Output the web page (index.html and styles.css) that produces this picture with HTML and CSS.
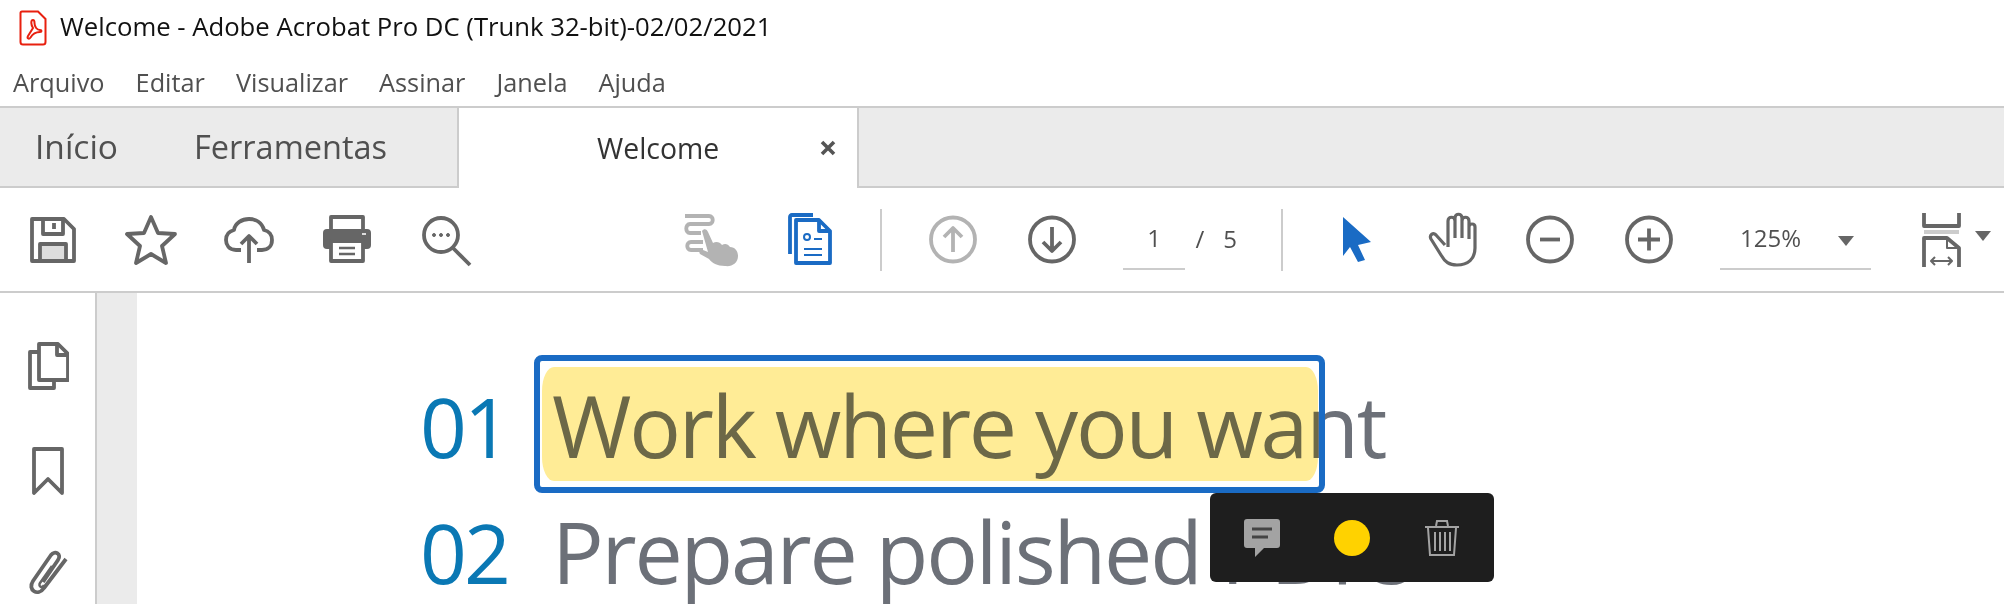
FILE: index.html
```html
<!DOCTYPE html>
<html>
<head>
    <title>Welcome - Adobe Acrobat Pro DC</title>
    <link rel="stylesheet" href="styles.css">
</head>
<body>
    <div class="title-bar">
        <svg class="app-icon" width="28" height="36" viewBox="0 0 28 36">
            <path d="M3 1.500H19L26.500 9V32Q26.500 34.500 24 34.500H4Q1.500 34.500 1.500 32V3Q1.500 1.500 3 1.500Z" fill="#fff" stroke="#e8200f" stroke-width="2"/>
            <path d="M14 10C11.500 10 12 15 14 18L9 26C7.500 28.500 10 29.500 11.500 27.500C13.500 24 17 22 21 22C23 22 23 20 21 20C18 20 15.500 17 15.500 13C15.500 11 15 10 14 10Z" fill="none" stroke="#e8200f" stroke-width="2"/>
        </svg>
        <span class="app-title">Welcome - Adobe Acrobat Pro DC (Trunk 32-bit)-02/02/2021</span>
    </div>
    <div class="menu-bar">
        <span class="menu-item">Arquivo</span>
        <span class="menu-item">Editar</span>
        <span class="menu-item">Visualizar</span>
        <span class="menu-item">Assinar</span>
        <span class="menu-item">Janela</span>
        <span class="menu-item">Ajuda</span>
    </div>
    <div class="tab-bar">
        <span class="tab tab-home">Início</span>
        <span class="tab tab-tools">Ferramentas</span>
        <div class="tab-doc">
            <span class="tab-doc-name">Welcome</span>
            <svg class="tab-close" width="16" height="16" viewBox="0 0 16 16"><path d="M2 2L14 14M14 2L2 14"/></svg>
        </div>
    </div>
    <div class="toolbar">
        <div class="tool-group">
            <svg class="tool" viewBox="0 0 50 54"><path d="M4 6H36L46 16V48H4Z"/><path d="M15 6V21H35V6"/><path d="M26 10V16"/><rect x="12" y="31" width="26" height="17" fill="#ddd"/></svg>
            <svg class="tool" viewBox="0 0 50 54"><polygon points="25,4 32,20 49,21 36,33 40,50 25,41 10,50 14,33 1,21 18,20"/></svg>
            <svg class="tool" viewBox="0 0 50 54"><path d="M17 37H12C5 37 2 32 2 27C2 21 6 18 10 17C11 10 18 6 25 6C32 6 38 10 40 17C45 18 48 22 48 27C48 33 44 37 38 37H33"/><path d="M25 50V24M17 31L25 23L33 31"/></svg>
            <svg class="tool" viewBox="0 0 50 54"><rect x="9" y="4" width="32" height="14"/><rect x="1" y="16" width="48" height="20" rx="4" fill="#666" stroke="none"/><rect x="9" y="28" width="32" height="20" fill="#fff"/><path d="M17 35H33M17 41H33" stroke-width="2.500"/><path d="M40 21H44" stroke="#ddd" stroke-width="2"/></svg>
            <svg class="tool" viewBox="0 0 50 54"><circle cx="21" cy="22" r="17"/><path d="M33 35L50 52"/><circle cx="14" cy="22" r="1.500" fill="#666" stroke-width="1"/><circle cx="21" cy="22" r="1.500" fill="#666" stroke-width="1"/><circle cx="28" cy="22" r="1.500" fill="#666" stroke-width="1"/></svg>
        </div>
        <svg class="tool tool-gesture" viewBox="0 0 50 54"><path class="soft" d="M0 3H24C29 3 29 11 24 11H5C0 11 0 20 5 20H16M18 29H6C1 29 1 37 6 37H18"/><path d="M17 18C19 15 22 16 23 19L28 30C31 28 35 29 37 32C40 30 43 31 45 34C50 34 53 38 53 43C53 50 47 54 40 53C32 53 27 50 24 46L15 41C13 38 16 36 18 37L23 39Z" fill="#b3b3b3" stroke="none"/></svg>
        <svg class="tool tool-pages" viewBox="0 0 50 54"><g class="blue"><path d="M5 41V4Q5 2 7 2H28"/><path d="M11 7H34L45 18V50H11Z"/><path d="M34 7V18H45"/><circle cx="22" cy="24" r="3" stroke-width="2"/><path d="M29 26H37M19 36H37M19 42H37" stroke-width="2.200"/></g></svg>
        <div class="tool-sep sep-first"></div>
        <svg class="tool tool-up" viewBox="0 0 50 54"><g class="soft"><circle cx="25" cy="26.500" r="22"/><path d="M25 39V15M16 24L25 15L34 24"/></g></svg>
        <svg class="tool tool-down" viewBox="0 0 50 54"><circle cx="25" cy="26.500" r="22"/><path d="M25 14V38M16 29L25 38L34 29"/></svg>
        <div class="page-field">1</div>
        <span class="page-text">/</span>
        <span class="page-text">5</span>
        <div class="tool-sep sep-second"></div>
        <svg class="tool tool-cursor" viewBox="0 0 30 54"><polygon class="cursor-shape" points="1,4 29,29 16,32 23,47 16,49 8,34 1,43"/></svg>
        <svg class="tool tool-hand" viewBox="0 0 50 54"><path d="M17 32L8 22C5 19 1 22 3 26L13 42C17 49 21 52 29 52C40 52 47 46 47 35V14C47 10 41 10 41 14V26M41 26V8C41 3 34 3 34 8V25M34 25V5C34 0 27 0 27 5V25M27 25V8C27 3 20 3 20 8V34" stroke-width="3.200"/></svg>
        <svg class="tool tool-minus" viewBox="0 0 50 54"><circle cx="25" cy="26.500" r="22"/><path d="M15 26.500H35"/></svg>
        <svg class="tool tool-plus" viewBox="0 0 50 54"><circle cx="25" cy="26.500" r="22"/><path d="M14 26.500H36M25 15.500V37.500"/></svg>
        <div class="zoom-field">
            <span class="zoom-value">125%</span>
            <span class="caret"></span>
        </div>
        <svg class="tool tool-fit" viewBox="0 0 37 54"><path d="M1 0V13H36V0"/><path d="M1 19H36" stroke="#ccc"/><path d="M1 54V25H24L36 35V54"/><path d="M24 25V35H36" stroke-width="2"/><path d="M8 48H29M12 44L8 48L12 52M25 44L29 48L25 52" stroke-width="2"/></svg>
        <span class="caret caret-fit"></span>
    </div>
    <div class="workspace">
        <div class="side-panel">
            <svg class="side-icon" width="42" height="48" viewBox="0 0 42 48"><path d="M12 10H3V46H27V38"/><path d="M12 2H31L41 12V38H12Z"/><path d="M30 2V13H41"/></svg>
            <svg class="side-icon" width="32" height="48" viewBox="0 0 32 48"><path d="M2 2H30V46L16 32L2 46Z"/></svg>
            <svg class="side-icon side-clip" width="42" height="46" viewBox="0 0 42 46"><path d="M16 33L31 11C35 5 28 1 24 6L6 32C0 41 11 48 17 39L39 10"/><path d="M25 17L13 34C11 37 15 40 17 36" stroke-width="2.500"/></svg>
        </div>
        <div class="gutter"></div>
        <div class="document">
            <div class="doc-line"><span class="doc-num">01</span><span class="doc-text">Work where you want</span></div>
            <div class="doc-line"><span class="doc-num">02</span><span class="doc-text">Prepare polished PDFs</span></div>
            <div class="highlight-box"><div class="highlight-fill"></div></div>
            <div class="note-popup">
                <svg width="36" height="38" viewBox="0 0 36 38"><path d="M3 0H33Q36 0 36 3V26Q36 29 33 29H20L11 38V29H3Q0 29 0 26V3Q0 0 3 0Z" fill="#a3a3a3"/><path d="M8 10H28M8 18H24" stroke="#444" stroke-width="3"/></svg>
                <span class="note-color"></span>
                <svg width="36" height="38" viewBox="0 0 36 38" fill="none" stroke="#a3a3a3" stroke-width="2"><path d="M1 8H35M12 7L13 2H23L24 7"/><path d="M4 9L6 36H30L32 9"/><path d="M11 13V32M16 13V32M21 13V32M26 13V32"/></svg>
            </div>
        </div>
    </div>
</body>
</html>
```

FILE: styles.css
```css
html, body {
    margin: 0;
    height: 604px;
    overflow: hidden;
}
body {
    font-family: 'Open Sans', sans-serif;
    background-color: #fff;
    color: #505050;
}
.title-bar {
    display: flex;
    align-items: center;
    height: 56px;
    padding-left: 19px;
}
.app-title {
    margin-left: 13px;
    margin-bottom: 4px;
    font-size: 25.7px;
    color: #111;
}
.menu-bar {
    display: flex;
    gap: 31px;
    height: 50px;
    padding-left: 13px;
    font-size: 25.300px;
    line-height: 53px;
}
.tab-bar {
    display: flex;
    height: 78px;
    border-top: 2px solid #ccc;
    border-bottom: 2px solid #ccc;
    background-color: #ebebeb;
}
.tab {
    flex: none;
    font-size: 32.500px;
    line-height: 77px;
}
.tab-home {
    width: 159px;
    margin-left: 35px;
    font-size: 33.500px;
}
.tab-tools {
    width: 263px;
}
.tab-doc {
    display: flex;
    align-items: center;
    box-sizing: border-box;
    width: 402px;
    height: 80px;
    border-left: 2px solid #ccc;
    border-right: 2px solid #ccc;
    background-color: #fff;
    color: #333;
    font-size: 28.400px;
    line-height: 80px;
}
.tab-doc-name {
    width: 122px;
    margin-left: 138px;
}
.tab-close {
    margin-left: 101px;
    fill: none;
    stroke: #555;
    stroke-width: 3.600;
}
.toolbar {
    display: flex;
    align-items: center;
    height: 103px;
    padding-left: 28px;
    border-bottom: 2px solid #ccc;
}
.tool-group {
    display: flex;
    gap: 48px;
}
.tool {
    flex: none;
    width: 50px;
    height: 54px;
    overflow: visible;
    fill: none;
    stroke: #666;
    stroke-width: 3.800;
    stroke-linejoin: round;
}
.tool .soft {
    stroke: #b3b3b3;
}
.tool .blue {
    stroke: #1a6bc4;
    stroke-width: 3.800;
}
.tool-gesture {
    margin-left: 215px;
}
.tool-pages {
    margin-left: 50px;
}
.tool-sep {
    flex: none;
    width: 2px;
    height: 62px;
    background-color: #ccc;
}
.sep-first {
    margin-left: 45px;
}
.tool-up {
    margin-left: 46px;
}
.tool-down {
    margin-left: 49px;
}
.page-field {
    flex: none;
    box-sizing: border-box;
    width: 62px;
    height: 60px;
    margin-left: 46px;
    border-bottom: 2px solid #ccc;
    text-align: center;
    font-size: 24px;
    line-height: 56px;
}
.page-text {
    flex: none;
    width: 30px;
    margin-bottom: 3px;
    text-align: center;
    font-size: 24px;
}
.sep-second {
    margin-left: 36px;
}
.tool-cursor {
    width: 30px;
    margin-left: 59px;
}
.cursor-shape {
    fill: #1a6bc4;
    stroke: none;
}
.tool-hand {
    margin-left: 56px;
}
.tool-minus {
    margin-left: 47px;
}
.tool-plus {
    margin-left: 49px;
}
.zoom-field {
    display: flex;
    flex: none;
    box-sizing: border-box;
    width: 151px;
    height: 60px;
    margin-left: 46px;
    padding-left: 20px;
    border-bottom: 2px solid #ccc;
    font-size: 24px;
    line-height: 56px;
}
.zoom-value {
    flex: none;
    width: 98px;
}
.caret {
    flex: none;
    width: 0;
    height: 0;
    margin-top: 26px;
    border-left: 8px solid transparent;
    border-right: 8px solid transparent;
    border-top: 10px solid #666;
}
.tool-fit {
    width: 37px;
    margin-left: 52px;
}
.caret-fit {
    margin-top: -8px;
    margin-left: 15px;
}
.workspace {
    display: flex;
    height: 311px;
}
.side-panel {
    display: flex;
    flex-direction: column;
    align-items: center;
    flex: none;
    gap: 57px;
    box-sizing: border-box;
    width: 97px;
    padding-top: 49px;
    border-right: 2px solid #ccc;
}
.side-icon {
    flex: none;
    fill: none;
    stroke: #666;
    stroke-width: 3.800;
    stroke-linejoin: round;
}
.side-clip {
    margin-top: -3px;
}
.gutter {
    flex: none;
    width: 40px;
    background-color: #ebebeb;
}
.document {
    position: relative;
    display: flex;
    flex-direction: column;
    flex: 1;
    gap: 25px;
    padding-top: 82px;
    padding-left: 285px;
    overflow: hidden;
    font-size: 86px;
    line-height: 100px;
    letter-spacing: -2.200px;
    color: #6c7078;
}
.doc-line {
    display: flex;
    align-items: baseline;
    white-space: nowrap;
}
.doc-num {
    flex: none;
    width: 130px;
    font-size: 82px;
    letter-spacing: -3px;
    color: #0a78b4;
}
.doc-line .doc-num {
    margin-left: -2px;
    margin-right: 2px;
}
.highlight-box {
    position: absolute;
    left: 397px;
    top: 62px;
    box-sizing: border-box;
    width: 791px;
    height: 138px;
    padding: 6px 1px 6px 2px;
    border: 6px solid #1a6bc4;
    border-radius: 8px;
}
.highlight-fill {
    height: 100%;
    border-radius: 12px / 24px;
    background-color: #ffec96;
    mix-blend-mode: multiply;
}
.note-popup {
    position: absolute;
    left: 1073px;
    top: 200px;
    display: flex;
    align-items: center;
    gap: 54px;
    box-sizing: border-box;
    width: 284px;
    height: 89px;
    padding-left: 34px;
    border-radius: 6px;
    background-color: #1e1e1e;
}
.note-color {
    flex: none;
    width: 36px;
    height: 36px;
    border-radius: 50%;
    background-color: #ffd200;
}
```
